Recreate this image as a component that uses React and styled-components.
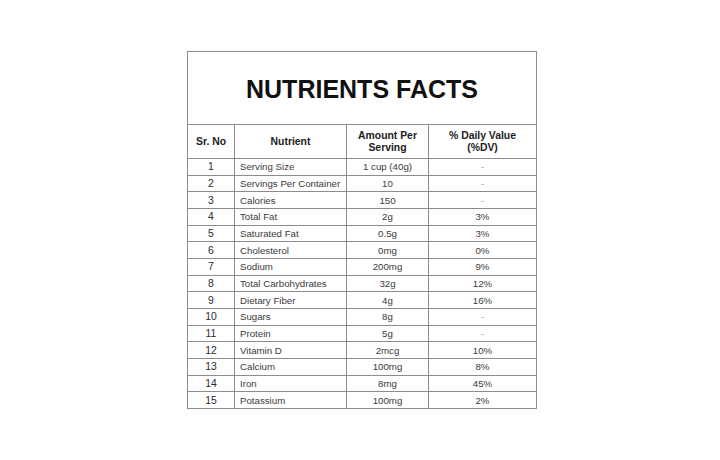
import styled, { createGlobalStyle } from "styled-components";

const rows = [
  [1, "Serving Size", "1 cup (40g)", "-"],
  [2, "Servings Per Container", "10", "-"],
  [3, "Calories", "150", "-"],
  [4, "Total Fat", "2g", "3%"],
  [5, "Saturated Fat", "0.5g", "3%"],
  [6, "Cholesterol", "0mg", "0%"],
  [7, "Sodium", "200mg", "9%"],
  [8, "Total Carbohydrates", "32g", "12%"],
  [9, "Dietary Fiber", "4g", "16%"],
  [10, "Sugars", "8g", "-"],
  [11, "Protein", "5g", "-"],
  [12, "Vitamin D", "2mcg", "10%"],
  [13, "Calcium", "100mg", "8%"],
  [14, "Iron", "8mg", "45%"],
  [15, "Potassium", "100mg", "2%"],
];

const line = "#8c8c8c";

const GlobalStyle = createGlobalStyle`
  html, body {
    margin: 0;
    background: #fff;
  }
  body {
    font-family: "Liberation Sans", Arial, sans-serif;
  }
`;

const Page = styled.div`
  width: 720px;
  height: 460px;
  padding: 51px 0 0 187px;
  box-sizing: border-box;
`;

const Card = styled.div`
  width: 348px;
  border: 1px solid ${line};
`;

const Title = styled.h1`
  margin: 0;
  height: 72px;
  display: flex;
  align-items: center;
  justify-content: center;
  padding-top: 2px;
  box-sizing: border-box;
  font-size: 25px;
  font-weight: 700;
  color: #111;
`;

const Grid = styled.div`
  display: grid;
  grid-template-columns: 46px 112px 82px 108px;
  grid-template-rows: 34px repeat(15, 16.67px);
`;

const Cell = styled.div`
  display: flex;
  align-items: center;
  justify-content: ${(p) => (p.$left ? "flex-start" : "center")};
  padding: 0 ${(p) => (p.$left ? "5px" : "2px")};
  border-top: 1px solid ${line};
  border-left: ${(p) => (p.$first ? "none" : `1px solid ${line}`)};
  box-sizing: border-box;
  font-size: 9.7px;
  line-height: 11px;
  color: #3a3a3a;
  white-space: nowrap;
`;

const HeadCell = styled(Cell)`
  text-align: center;
  font-size: 10.4px;
  line-height: 12px;
  font-weight: 700;
  color: #222;
`;

const IndexCell = styled(Cell)`
  font-size: 10.4px;
  color: #2a2a2a;
`;

const Dash = styled.span`
  color: #9a9a9a;
`;

export default function App() {
  return (
    <>
      <GlobalStyle />
      <Page>
        <Card>
          <Title>NUTRIENTS FACTS</Title>
          <Grid>
            <HeadCell $first>Sr. No</HeadCell>
            <HeadCell>Nutrient</HeadCell>
            <HeadCell>
              Amount Per
              <br />
              Serving
            </HeadCell>
            <HeadCell>
              % Daily Value
              <br />
              (%DV)
            </HeadCell>
            {rows.map(([no, name, amount, dv]) => [
              <IndexCell key={`${no}-a`} $first>
                {no}
              </IndexCell>,
              <Cell key={`${no}-b`} $left>
                {name}
              </Cell>,
              <Cell key={`${no}-c`}>{amount}</Cell>,
              <Cell key={`${no}-d`}>{dv === "-" ? <Dash>-</Dash> : dv}</Cell>,
            ])}
          </Grid>
        </Card>
      </Page>
    </>
  );
}
